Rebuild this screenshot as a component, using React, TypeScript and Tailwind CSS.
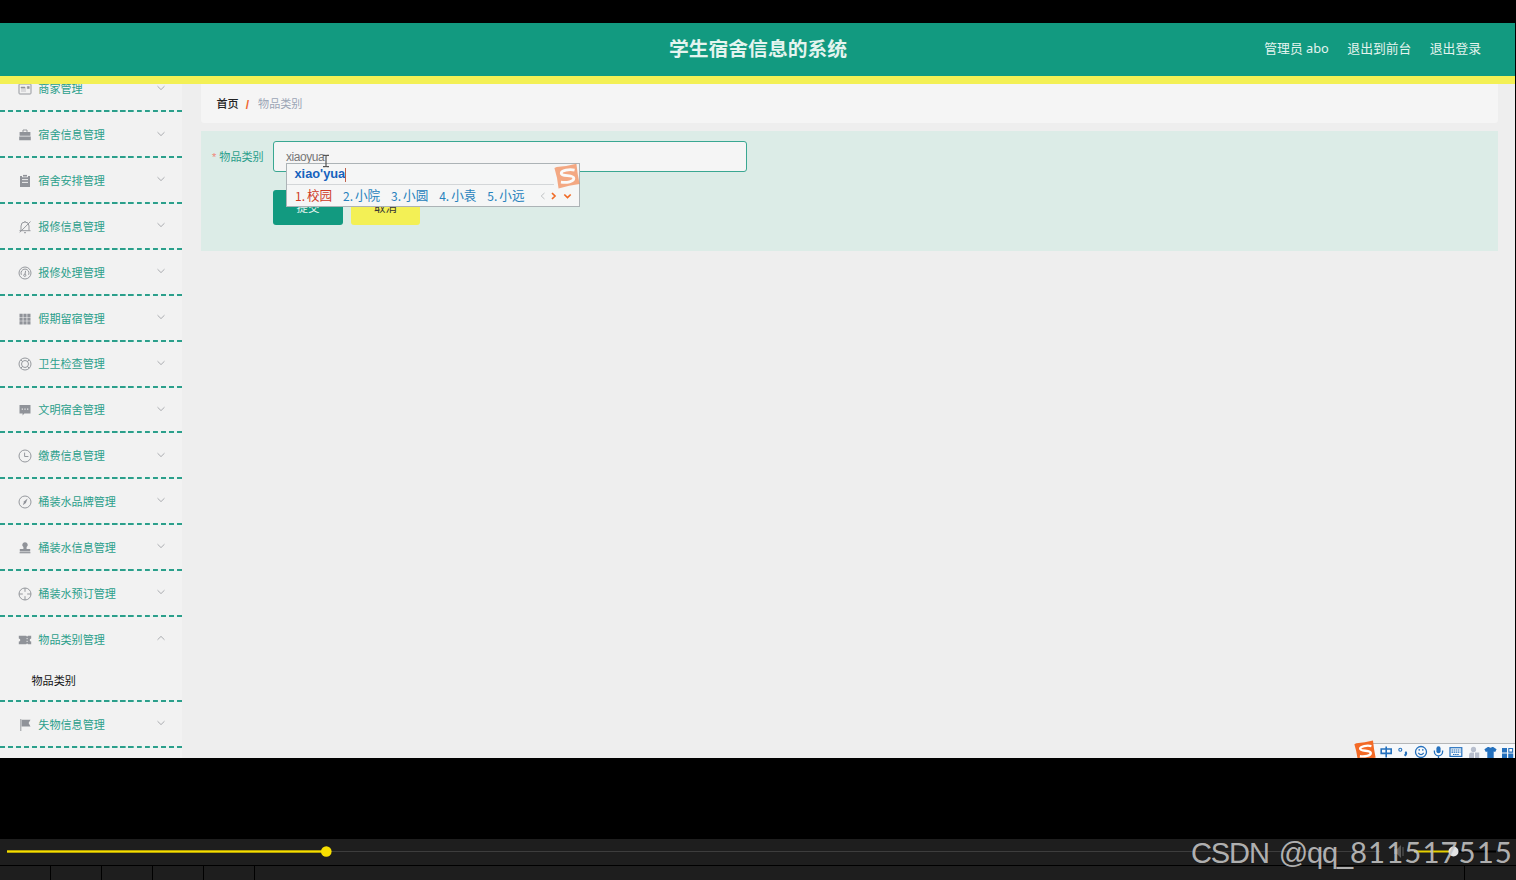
import { ReactNode } from "react";

interface MenuItem {
  title: string;
  icon: ReactNode;
  children?: string[];
}

function Icon({ children }: { children: ReactNode }) {
  return (
    <svg viewBox="0 0 14 14" className="h-[14px] w-[14px] shrink-0" fill="none" stroke="#909399" strokeWidth="0.95">
      {children}
    </svg>
  );
}

const menus: MenuItem[] = [
  {
    title: "商家管理",
    icon: (
      <Icon>
        <rect x="1" y="2" width="12" height="10" rx="0.8" />
        <path d="M3 5h4v1H3zM3 7h5M3 9h5M9.3 4.5h2v2h-2z" fill="#909399" strokeWidth="0.5" />
      </Icon>
    ),
  },
  {
    title: "宿舍信息管理",
    icon: (
      <Icon>
        <path d="M5 4V2h4v2" />
        <path d="M1.6 4h10.8v3.7H1.6zM1.2 8.6h11.6v3.7H1.2z" fill="#909399" stroke="none" />
      </Icon>
    ),
  },
  {
    title: "宿舍安排管理",
    icon: (
      <Icon>
        <path d="M2 2h2v1.2h6V2h2v11H2z" fill="#909399" stroke="none" />
        <path d="M5 .9h4v1.6H5z" fill="#909399" stroke="none" />
        <path d="M4 5.6h6M4 8.4h6" stroke="#f2f2f2" />
      </Icon>
    ),
  },
  {
    title: "报修信息管理",
    icon: (
      <Icon>
        <path d="M3 10.5V6a4 4 0 0 1 8 0v4.5M1.5 10.7h11M6 12.7h2M7 2V1M1.7 12.4 12.5 1.6" />
      </Icon>
    ),
  },
  {
    title: "报修处理管理",
    icon: (
      <Icon>
        <circle cx="7" cy="7" r="6" />
        <path d="M3.4 8.8A4 4 0 1 1 10.6 8.8M7.6 4.8 7 8.3" />
        <circle cx="6.8" cy="9.3" r="1.1" />
      </Icon>
    ),
  },
  {
    title: "假期留宿管理",
    icon: (
      <Icon>
        <path
          d="M1.5 1.7h3.2v3.2H1.5zM5.4 1.7h3.2v3.2H5.4zM9.3 1.7h3.2v3.2H9.3zM1.5 5.5h3.2v3.2H1.5zM5.4 5.5h3.2v3.2H5.4zM9.3 5.5h3.2v3.2H9.3zM1.5 9.3h3.2v3.2H1.5zM5.4 9.3h3.2v3.2H5.4zM9.3 9.3h3.2v3.2H9.3z"
          fill="#909399"
          stroke="none"
        />
      </Icon>
    ),
  },
  {
    title: "卫生检查管理",
    icon: (
      <Icon>
        <circle cx="7" cy="7" r="6" />
        <circle cx="7" cy="7" r="3.5" />
        <path d="m2.8 2.8 1.9 1.9M11.2 2.8 9.3 4.7M2.8 11.2l1.9-1.9M11.2 11.2 9.3 9.3" />
      </Icon>
    ),
  },
  {
    title: "文明宿舍管理",
    icon: (
      <Icon>
        <path d="M1.5 2h11v8.4H6.3L4.6 12.5v-2.1H1.5z" fill="#909399" stroke="none" />
        <path d="M3.7 6.2h1.2M6.4 6.2h1.2M9.1 6.2h1.2" stroke="#f2f2f2" strokeWidth="1.2" />
      </Icon>
    ),
  },
  {
    title: "缴费信息管理",
    icon: (
      <Icon>
        <circle cx="7" cy="7" r="6" />
        <path d="M6.6 3.6v3.9h3.8" />
      </Icon>
    ),
  },
  {
    title: "桶装水品牌管理",
    icon: (
      <Icon>
        <circle cx="7" cy="7" r="6" />
        <path d="M9.6 3.6 7.9 8 4.8 10.2 6.2 6.2z" fill="#909399" stroke="none" />
      </Icon>
    ),
  },
  {
    title: "桶装水信息管理",
    icon: (
      <Icon>
        <path d="M7 1.2a2.7 2.7 0 0 1 1.6 4.9v2h3.6v2.4H1.8V8.1h3.6v-2A2.7 2.7 0 0 1 7 1.2z" fill="#909399" stroke="none" />
        <path d="M1.6 11.7h10.8" strokeWidth="1.2" />
      </Icon>
    ),
  },
  {
    title: "桶装水预订管理",
    icon: (
      <Icon>
        <circle cx="7" cy="7" r="6" />
        <path d="M7 1v3.8M7 9.2V13M1 7h3.8M9.2 7H13" />
      </Icon>
    ),
  },
  {
    title: "物品类别管理",
    icon: (
      <Icon>
        <path
          d="M.8 2.7h7.4l.9 1 .9-1h3.2v2.8a1.5 1.5 0 0 0 0 3v2.8H10l-.9-1-.9 1H.8V8.5a1.5 1.5 0 0 0 0-3z"
          fill="#909399"
          stroke="none"
        />
        <path d="M9.1 5v1.2M9.1 7.8V9" stroke="#f2f2f2" />
      </Icon>
    ),
    children: ["物品类别"],
  },
  {
    title: "失物信息管理",
    icon: (
      <Icon>
        <path d="M2.8 1v12" />
        <path d="M3.6 1.8h8.9L10.6 5l1.9 3.6H3.6z" fill="#909399" stroke="none" />
      </Icon>
    ),
  },
];

function Dashes() {
  return (
    <div className="h-[2px] w-full shrink-0 bg-[repeating-linear-gradient(90deg,#2b9f8b_0px,#2b9f8b_4.9px,#e6f5f1_5.3px,#e6f5f1_8.03px)]" />
  );
}

function SideMenu() {
  return (
    <aside className="w-[182px] shrink-0 overflow-hidden bg-[#f2f2f2]">
      <ul className="-mt-[17.4px]">
        {menus.map((menu) => (
          <li key={menu.title} className="flex flex-col">
            <div className="flex h-[43.86px] items-center pl-[18.3px] pr-[16px] pt-[1.4px]">
              {menu.icon}
              <span className="ml-[6px] grow whitespace-nowrap pt-[1.3px] text-[11.1px] leading-none text-[#2b9f8b]">{menu.title}</span>
              <svg
                viewBox="0 0 10 6"
                className={menu.children ? "-mt-[3px] h-[6px] w-[10px] rotate-180" : "-mt-[3px] h-[6px] w-[10px]"}
                fill="none"
                stroke="#a2a4a8"
                strokeWidth="0.9"
              >
                <path d="m1.5 1.2 3.5 3.4 3.5-3.4" />
              </svg>
            </div>
            {menu.children?.map((child) => (
              <div key={child} className="flex h-[39.3px] items-center pl-[31.5px] pt-[1.4px] text-[11.1px] text-[#151515]">
                {child}
              </div>
            ))}
            <Dashes />
          </li>
        ))}
      </ul>
    </aside>
  );
}

function SogouLogo({ className }: { className: string }) {
  return (
    <svg viewBox="0 0 24 24" className={className} fill="none">
      <path d="M2.5 3.6 Q12 3 20.7 .6 Q21.6 10 23.6 19.4 Q14 20.4 4.2 23.5 Q3.4 14 .4 4.6z" fill="#f36a26" />
      <path
        d="M19 6.6C14.5 5.6 6.6 6.6 6.7 9.6c.1 3.2 11.6 1 11.6 4.5 0 3.2-6.4 4.3-11.9 3.6"
        stroke="#fff"
        strokeWidth="2.6"
      />
    </svg>
  );
}

const candidates = ["校园", "小院", "小圆", "小袁", "小远"];

function ImePopup() {
  return (
    <div className="absolute left-[286px] top-[140px] h-[44px] w-[294px] border border-[#acb3b6] bg-[#f5f6f6]">
      <div className="flex h-[21px] w-[267px] items-center border-b border-[#d3d6d8] pl-[7.5px] pt-px">
        <span className="text-[12.8px] font-bold leading-none text-[#1763bd]">xiao'yua</span>
        <span className="h-[14px] w-px shrink-0 bg-[#c0604b]" />
      </div>
      <div className="flex h-[21px] items-center whitespace-nowrap pl-[8px] pt-px text-[12.6px] leading-none">
        {candidates.map((word, i) => (
          <span key={word} className={i === 0 ? "flex w-[48px] items-center text-[#cf3a25]" : "flex w-[48.1px] items-center text-[#2883bd]"}>
            <span className="w-[12px] font-['Noto_Sans_CJK_SC'] text-[12px]">{i + 1}.</span>
            {word}
          </span>
        ))}
        <svg viewBox="0 0 36 10" className="ml-[4px] h-[10px] w-[36px]" fill="none">
          <path d="M5.5 2 2.2 5l3.3 3" stroke="#bfc2c4" />
          <path d="m13 2 3 3-3 3M25.3 3.5l3.2 3 3.2-3" stroke="#f06a24" strokeWidth="1.7" />
        </svg>
      </div>
      <SogouLogo className="absolute -top-[1px] left-[267px] h-[26px] w-[26px] opacity-55" />
    </div>
  );
}

function ImeBar() {
  return (
    <div className="absolute bottom-0 right-0 h-[15px] w-[150px] border-t border-[#b4b6b8] bg-[#f6f8fa]">
      <SogouLogo className="absolute -left-[12px] -top-[4px] h-[22px] w-[24px]" />
      <svg viewBox="0 0 136 15" className="absolute left-[14px] top-0 h-[15px] w-[136px]" fill="none" stroke="#2470bd" strokeWidth="1.6">
        <path d="M2.2 5h10v4.4h-10zM7.2 2.5v11" />
        <circle cx="21.3" cy="5.7" r="1.5" strokeWidth="1.1" />
        <path d="M26.3 7.8c1.2.9 1.1 2.4-.7 4" strokeWidth="2.2" />
        <circle cx="42" cy="8" r="5.5" strokeWidth="1.3" />
        <path d="M39.3 8.8q2.7 3.8 5.4 0M40.2 5v1.8M43.8 5v1.8" strokeWidth="1.2" />
        <rect x="57.4" y="2.3" width="4.2" height="7" rx="2.1" fill="#2470bd" stroke="none" />
        <path d="M55.4 6.5v1.2a4.1 4.1 0 0 0 8.2 0V6.5M59.5 11.6V14" strokeWidth="1.3" />
        <rect x="71" y="3.7" width="11.8" height="8.7" strokeWidth="1.2" />
        <path d="M72.5 6h9M72.5 8.2h9M74 10.5h6" strokeDasharray="1.5 .6" strokeWidth="1.2" />
        <g fill="#b8bfce" stroke="none">
          <circle cx="94.5" cy="5.4" r="2.6" />
          <path d="M90 15v-4q0-2.4 2.5-2.4H95V15zM96 8.6h4.2V15H96z" />
        </g>
        <path d="m105.4 5.2 3.4-2.3h1.1q1.6 1.5 3.2 0h1.1l3.4 2.3-1.4 2.8-1.5-.5V14h-6.4V7.5l-1.5.5z" fill="#2470bd" stroke="none" />
        <path d="M123 4h5v4.6h-5zM123 9.6h5V15h-5zM129.2 9.6h5V15h-5z" fill="#2470bd" stroke="none" />
        <path d="M129.8 4.5h3.8v3.6h-3.8z" strokeWidth="1.1" />
      </svg>
    </div>
  );
}

function PlayerBar() {
  return (
    <footer className="h-[41px] bg-[#1e1e1e]">
      <svg viewBox="0 0 1516 26" className="block h-[26px] w-full">
        <path d="M326 12.5h1054" stroke="#3d3d3d" />
        <path d="M7 12.5h319" stroke="#9d8d05" strokeWidth="3" />
        <path d="M7 12.5h319" stroke="#f7df00" strokeWidth="1.5" />
        <circle cx="326.3" cy="12.5" r="5.3" fill="#f7df00" />
        <path d="M1394 10h3l4-4v13l-4-4h-3z" fill="#5c5c5c" />
        <path d="M1403 8v9" stroke="#5c5c5c" />
        <path d="M1453 12.5h43" stroke="#000" strokeWidth="2" />
        <path d="M1414 12.5h39" stroke="#e5cf00" strokeWidth="2" />
        <circle cx="1453.5" cy="12.5" r="5" fill="#e4e4e4" />
      </svg>
      <div className="flex h-[15px] border-t border-black">
        {[1, 2, 3, 4, 5].map((n) => (
          <div key={n} className="w-[51px] shrink-0 border-r border-black" />
        ))}
        <div className="w-[1210px] border-r border-black" />
      </div>
    </footer>
  );
}

export default function App() {
  return (
    <div className="relative flex h-[880px] w-[1516px] flex-col overflow-hidden bg-black font-['Liberation_Sans','Noto_Sans_CJK_SC',sans-serif]">
      <div className="relative mt-[23px] flex h-[735px] w-[1515px] flex-col overflow-hidden bg-[#eeeeee]">
        <header className="grid h-[61px] shrink-0 grid-cols-3 items-center border-b-8 border-[#f3f055] bg-[#129a80] pb-[2px] font-['Noto_Sans','Noto_Sans_CJK_SC',sans-serif] text-[#e4f4ef]">
          <h1 className="col-start-2 pl-px text-center text-[19.8px] font-bold leading-none">学生宿舍信息的系统</h1>
          <nav className="flex justify-end gap-[18.5px] pr-[34px] text-[12.8px] leading-none">
            <span>管理员 abo</span>
            <span>退出到前台</span>
            <span>退出登录</span>
          </nav>
        </header>
        <div className="flex min-h-0 grow">
          <SideMenu />
          <main className="flex grow flex-col pl-[19px] pr-[17px]">
            <div className="flex h-[39px] items-center rounded-b-[3px] bg-[#f5f5f5] pl-[15.5px] pt-[2.5px] text-[11.1px] leading-none">
              <span className="font-medium text-[#222]">首页</span>
              <span className="ml-[7px] mr-[9px] text-[12px] font-bold text-[#f0652f]">/</span>
              <span className="text-[#9ba5b5]">物品类别</span>
            </div>
            <form className="mt-[8px] h-[120px] bg-[#dcece7] pl-[11px] pt-[10px]">
              <div className="flex h-[31px] items-center">
                <span className="w-[61px] whitespace-nowrap pt-[2.5px] text-[11.1px] leading-none text-[#2b9f8b]">
                  <span className="mr-[3px] text-[#ef8a7c]">*</span>物品类别
                </span>
                <div className="flex h-[31.5px] w-[474px] items-center rounded-[3px] border border-[#3aa792] bg-[#f5f5f5] pl-[12px] text-[12px] tracking-[-0.45px] text-[#777]">
                  xiaoyua
                </div>
              </div>
              <div className="mt-[18px] flex gap-[8px] pl-[61px] text-[11.5px]">
                <div className="flex h-[35px] w-[70px] items-center justify-center rounded-[3px] bg-[#129a80] pt-[2px] text-[#e4f4ef]">提交</div>
                <div className="flex h-[35px] w-[69px] items-center justify-center rounded-[3px] bg-[#f3f055] pt-[2px] text-[#333]">取消</div>
              </div>
            </form>
          </main>
        </div>
        <ImePopup />
        <svg viewBox="0 0 8 14" className="absolute left-[322px] top-[131px] h-[14px] w-[8px]" fill="none" stroke="#555" strokeWidth="1.2">
          <path d="M1 1.3h2.2L4 2l.8-.7H7M4 2v10M1 12.7h2.2L4 12l.8.7H7" />
        </svg>
        <ImeBar />
      </div>
      <div className="grow" />
      <PlayerBar />
      <div className="absolute left-[1191px] top-[834px] flex items-baseline whitespace-nowrap leading-[36px] text-[#c4c4c4]/90">
        <span className="w-[159px] whitespace-pre font-['Liberation_Sans',sans-serif] text-[29px] tracking-[-1.1px] [word-spacing:3px]">CSDN @qq_</span>
        <span className="font-['Lato','Liberation_Sans',sans-serif] text-[29.4px] tracking-[1.05px]">811517515</span>
      </div>
    </div>
  );
}
